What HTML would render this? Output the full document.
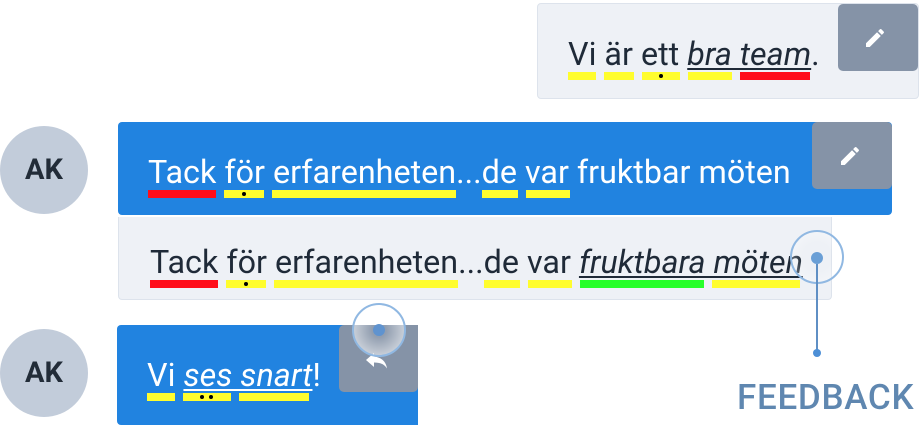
<!DOCTYPE html>
<html><head><meta charset="utf-8"><style>
body{margin:0;width:921px;height:419px;overflow:hidden;background:#fff;position:relative;font-family:"Roboto","Liberation Sans",sans-serif}
div,span{position:absolute}
.w{font-size:32.3px;line-height:32px;white-space:nowrap}
.w i{position:static}
.wh{color:#fff}.dk{color:#1f2a38}
.i{font-style:italic;text-decoration:underline;text-decoration-thickness:2px;text-underline-offset:3px}
.b{height:8px}
.y{background:#fffd2e}.r{background:#ff0d1a}.g{background:#27ff2a}
.dot{width:4px;height:4px;border-radius:2px;background:#000;top:2px}
.btn{background:#8593a7;border-radius:5px}
.av{width:88px;height:88px;border-radius:50%;background:#c2ccda;color:#222c38;font-weight:bold;font-size:29px;line-height:88px;text-align:center}
</style></head><body>
<div style="left:537px;top:3px;width:380px;height:94px;background:#eef1f6;border:1px solid #dde3ec;border-radius:4px"></div>
<div class="btn" style="left:838px;top:4px;width:80px;height:67px"></div>
<svg style="position:absolute;left:863px;top:26px" width="24" height="24" viewBox="0 0 24 24"><path fill="#fff" d="M3 17.25V21h3.75L17.8 9.94l-3.75-3.75L3 17.25zM20.7 7.04a1 1 0 000-1.41l-2.34-2.34a1 1 0 00-1.41 0l-1.83 1.83 3.75 3.75 1.83-1.83z"/></svg>
<span class="w dk" style="left:568px;top:38px">Vi är ett <i class="i">bra team</i>.</span>
<div class="b y" style="left:568px;top:72px;width:28px"></div>
<div class="b y" style="left:604px;top:72px;width:30px"></div>
<div class="b y" style="left:642px;top:72px;width:38px"><div class="dot" style="left:17px"></div></div>
<div class="b y" style="left:688px;top:72px;width:44px"></div>
<div class="b r" style="left:740px;top:72px;width:70px"></div>

<div class="av" style="left:0px;top:126px">AK</div>
<div style="left:118px;top:122px;width:774px;height:93px;background:#2183e0;border-radius:4px"></div>
<div class="btn" style="left:812px;top:122px;width:80px;height:67px"></div>
<svg style="position:absolute;left:838px;top:144px" width="24" height="24" viewBox="0 0 24 24"><path fill="#fff" d="M3 17.25V21h3.75L17.8 9.94l-3.75-3.75L3 17.25zM20.7 7.04a1 1 0 000-1.41l-2.34-2.34a1 1 0 00-1.41 0l-1.83 1.83 3.75 3.75 1.83-1.83z"/></svg>
<span class="w wh" style="left:148px;top:156px">Tack för erfarenheten...de var fruktbar möten</span>
<div class="b r" style="left:148px;top:190px;width:68px"></div>
<div class="b y" style="left:224px;top:190px;width:40px"><div class="dot" style="left:18px"></div></div>
<div class="b y" style="left:272px;top:190px;width:184px"></div>
<div class="b y" style="left:482px;top:190px;width:36px"></div>
<div class="b y" style="left:526px;top:190px;width:44px"></div>

<div style="left:118px;top:217px;width:712px;height:82px;background:#eef1f6;border:1px solid #dde3ec;border-top:none;border-radius:0 0 4px 4px"></div>
<span class="w dk" style="left:150px;top:246px">Tack för erfarenheten...de var <i class="i">fruktbara möten</i></span>
<div class="b r" style="left:150px;top:280px;width:68px"></div>
<div class="b y" style="left:226px;top:280px;width:40px"><div class="dot" style="left:18px"></div></div>
<div class="b y" style="left:274px;top:280px;width:184px"></div>
<div class="b y" style="left:484px;top:280px;width:36px"></div>
<div class="b y" style="left:528px;top:280px;width:44px"></div>
<div class="b g" style="left:580px;top:280px;width:124px"></div>
<div class="b y" style="left:712px;top:280px;width:88px"></div>
<div style="left:790px;top:230px;width:54px;height:54px;border-radius:50%;border:2px solid #90b8e2;box-sizing:border-box;background:radial-gradient(circle,rgba(255,255,255,0) 40%,rgba(255,255,255,.5) 100%)"></div>
<div style="left:811px;top:252px;width:12px;height:12px;border-radius:50%;background:#6a9fd6"></div>
<div style="left:816px;top:264px;width:2px;height:89px;background:#5f8fc4"></div>
<div style="left:813px;top:349px;width:8px;height:8px;border-radius:50%;background:#4d8fd6"></div>
<span style="left:737px;top:379px;font-size:35px;line-height:38px;color:#5f87b0;font-weight:500;letter-spacing:0.7px">FEEDBACK</span>

<div class="av" style="left:0px;top:329px">AK</div>
<div style="left:117px;top:325px;width:301px;height:100px;background:#2183e0;border-radius:4px 0 0 4px"></div>
<div class="btn" style="left:339px;top:325px;width:79px;height:67px;border-radius:5px 0 5px 5px"></div>
<svg style="position:absolute;left:364px;top:349px" width="26" height="22" viewBox="0 0 26 22"><path fill="#fff" d="M10 4L2 11l8 7v-4.5c6 0 10 1.5 13 6-1-6.5-5-11-13-12V4z"/></svg>
<div style="left:352px;top:303px;width:54px;height:54px;border-radius:50%;border:2px solid #90b8e2;box-sizing:border-box;background:radial-gradient(circle,rgba(255,255,255,.1) 20%,rgba(255,255,255,.8) 100%)"></div>
<div style="left:373px;top:324px;width:12px;height:12px;border-radius:50%;background:#5f93cf"></div>
<span class="w wh" style="left:147px;top:359px">Vi <i class="i">ses snart</i>!</span>
<div class="b y" style="left:147px;top:393px;width:28px"></div>
<div class="b y" style="left:183px;top:393px;width:48px"><div class="dot" style="left:17px"></div><div class="dot" style="left:26px"></div></div>
<div class="b y" style="left:239px;top:393px;width:70px"></div>
</body></html>
